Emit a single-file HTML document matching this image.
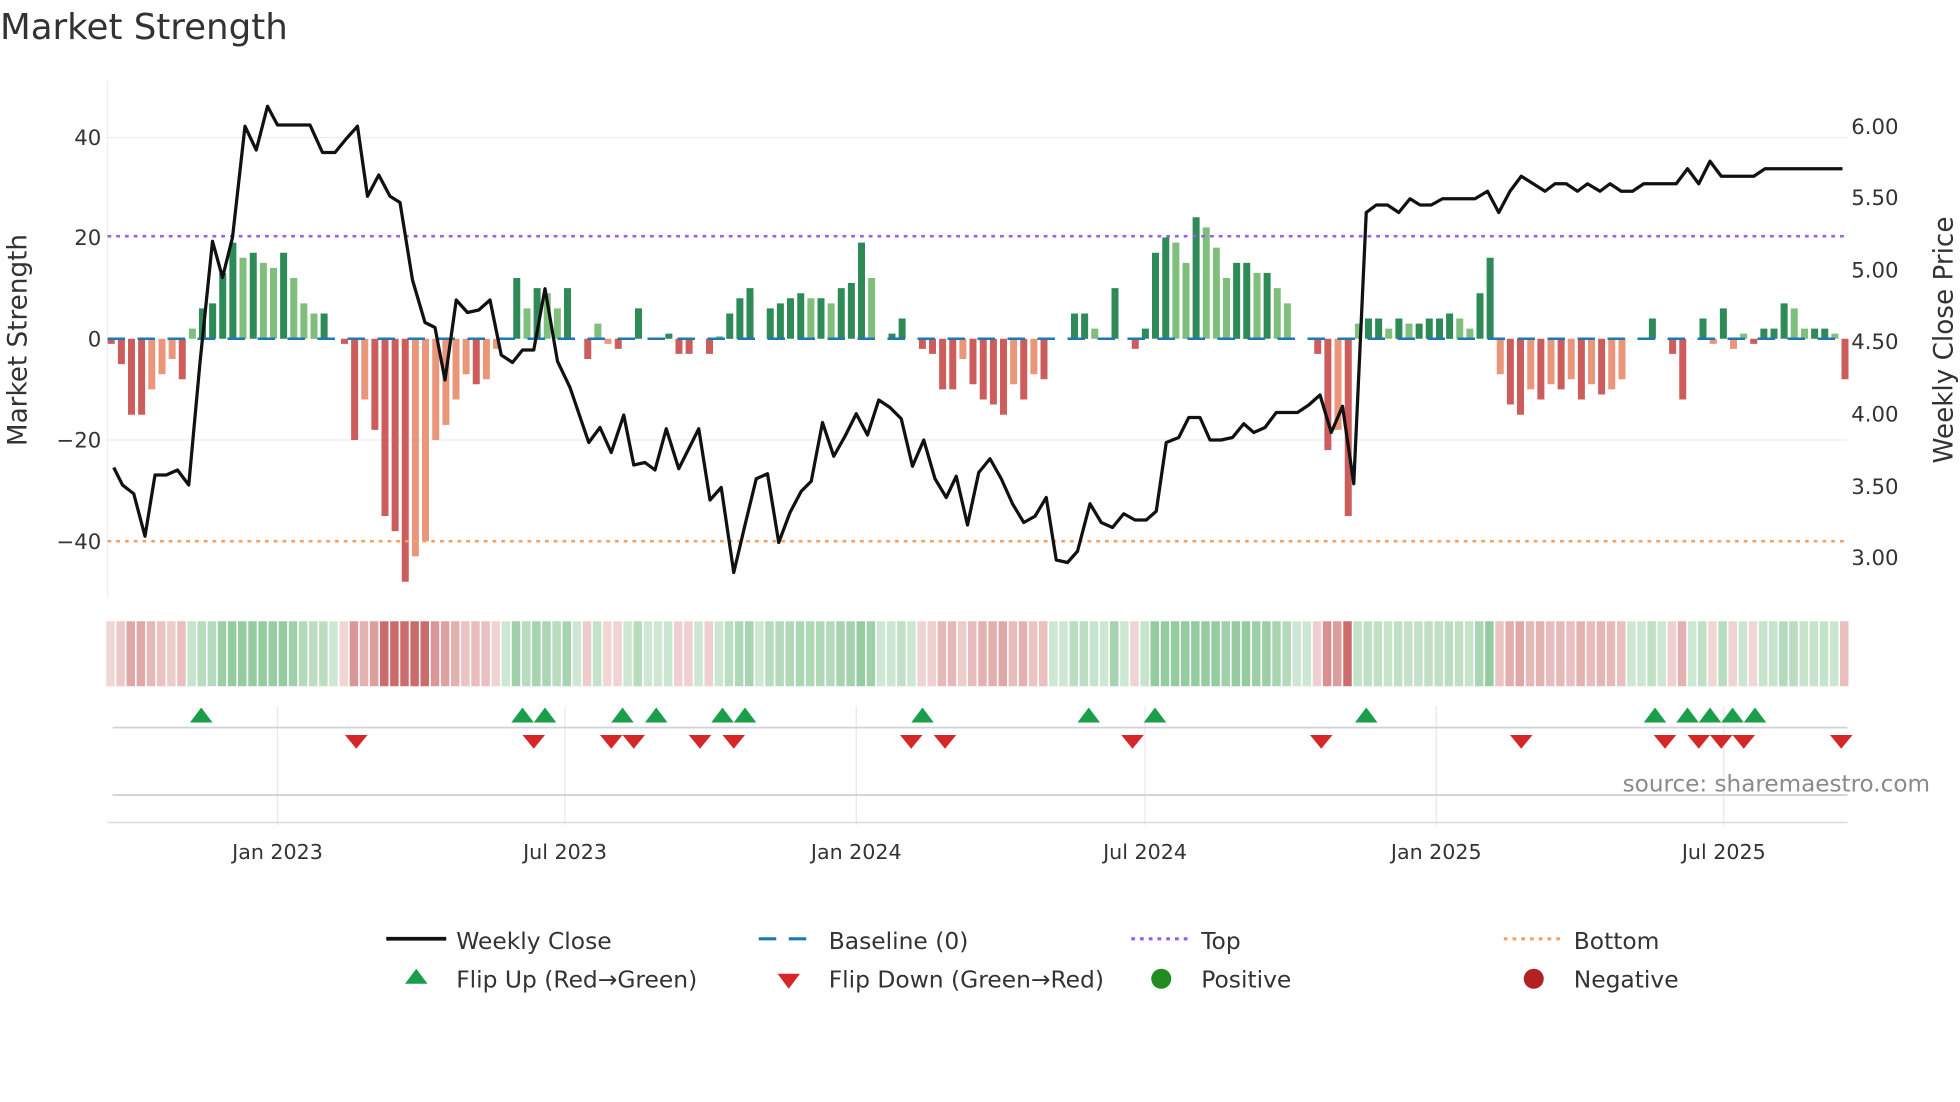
<!DOCTYPE html>
<html><head><meta charset="utf-8"><style>
html,body{margin:0;padding:0;background:#fff;width:1960px;height:1102px;overflow:hidden}
svg{display:block}
text{font-family:"DejaVu Sans","Liberation Sans",sans-serif;fill:#333}
</style></head><body>
<svg id="s" width="1960" height="1102" viewBox="0 0 1568 881.6" xmlns="http://www.w3.org/2000/svg">
<text x="0" y="31" font-size="28.5" fill="#333">Market Strength</text>
<g stroke="#ececec" stroke-width="1">
<line x1="86" y1="110" x2="1478" y2="110"/><line x1="86" y1="352" x2="1478" y2="352"/>
<line x1="86" y1="65" x2="86" y2="478" stroke="#eee"/>
</g>
<g font-size="17" text-anchor="end">
<text x="81" y="116">40</text><text x="81" y="196">20</text><text x="81" y="277">0</text>
<text x="81" y="358">−20</text><text x="81" y="439">−40</text>
</g>
<g font-size="17">
<text x="1481" y="107">6.00</text><text x="1481" y="164">5.50</text><text x="1481" y="222">5.00</text>
<text x="1481" y="279">4.50</text><text x="1481" y="337">4.00</text><text x="1481" y="395">3.50</text><text x="1481" y="452">3.00</text>
</g>
<text font-size="21" transform="translate(21,272) rotate(-90)" text-anchor="middle">Market Strength</text>
<text font-size="21" transform="translate(1562,272) rotate(-90)" text-anchor="middle">Weekly Close Price</text>
<g id="bars"></g>
<line x1="86" y1="271" x2="1478" y2="271" stroke="#1f77b4" stroke-width="2" stroke-dasharray="14,10"/>
<line x1="86" y1="189" x2="1478" y2="189" stroke="#9b5de5" stroke-width="2" stroke-dasharray="3,4"/>
<line x1="86" y1="433" x2="1478" y2="433" stroke="#f4a261" stroke-width="2" stroke-dasharray="3,4"/>
<polyline id="price" fill="none" stroke="#111" stroke-width="2.6" stroke-linejoin="round"/>
<g id="heat"></g>
<g stroke="#e8e8e8" stroke-width="1">
<line x1="222" y1="565" x2="222" y2="660"/><line x1="452" y1="565" x2="452" y2="660"/><line x1="685" y1="565" x2="685" y2="660"/>
<line x1="916" y1="565" x2="916" y2="660"/><line x1="1149" y1="565" x2="1149" y2="660"/><line x1="1379" y1="565" x2="1379" y2="660"/>
</g>
<line x1="90" y1="582" x2="1478" y2="582" stroke="#d0d4da" stroke-width="1.5"/>
<line x1="90" y1="636" x2="1478" y2="636" stroke="#d0d4da" stroke-width="1.5"/>
<line x1="86" y1="658" x2="1478" y2="658" stroke="#d8dadd" stroke-width="1.2"/>
<g id="tri"></g>
<text x="1544" y="633" font-size="18.5" text-anchor="end" style="fill:#8a8a8a">source: sharemaestro.com</text>
<g font-size="16.5" text-anchor="middle">
<text x="222" y="687">Jan 2023</text><text x="452" y="687">Jul 2023</text><text x="685" y="687">Jan 2024</text>
<text x="916" y="687">Jul 2024</text><text x="1149" y="687">Jan 2025</text><text x="1379" y="687">Jul 2025</text>
</g>
<g font-size="18.7">
<line x1="309" y1="751" x2="357" y2="751" stroke="#111" stroke-width="3"/>
<text x="365" y="759">Weekly Close</text>
<line x1="607" y1="751" x2="655" y2="751" stroke="#1f77b4" stroke-width="2.5" stroke-dasharray="14,10"/>
<text x="663" y="759">Baseline (0)</text>
<line x1="905" y1="751" x2="953" y2="751" stroke="#9b5de5" stroke-width="2.5" stroke-dasharray="3,4"/>
<text x="961" y="759">Top</text>
<line x1="1203" y1="751" x2="1251" y2="751" stroke="#f4a261" stroke-width="2.5" stroke-dasharray="3,4"/>
<text x="1259" y="759">Bottom</text>
<polygon points="333,775 324,787 342,787" fill="#1a9e4a"/>
<text x="365" y="790">Flip Up (Red→Green)</text>
<polygon points="622,779 640,779 631,791" fill="#d62728"/>
<text x="663" y="790">Flip Down (Green→Red)</text>
<circle cx="929" cy="783" r="8" fill="#228b22"/>
<text x="961" y="790">Positive</text>
<circle cx="1227" cy="783" r="8" fill="#b22222"/>
<text x="1259" y="790">Negative</text>
</g>
</svg>
<script>
var V=[-1,-5,-15,-15,-10,-7,-4,-8,2,6,7,13,19,16,17,15,14,17,12,7,5,5,0,-1,-20,-12,-18,-35,-38,-48,-43,-40,-20,-17,-12,-7,-9,-8,-2,0,12,6,10,9,6,10,0,-4,3,-1,-2,0,6,0,0,1,-3,-3,0,-3,0.5,5,8,10,0,6,7,8,9,8,8,7,10,11,19,12,0,1,4,0,-2,-3,-10,-10,-4,-9,-12,-13,-15,-9,-12,-7,-8,0,0,5,5,2,0,10,0,-2,2,17,20,19,15,24,22,18,12,15,15,13,13,10,7,0,0,-3,-22,-18,-35,3,4,4,2,4,3,3,4,4,5,4,2,9,16,-7,-13,-15,-10,-12,-9,-10,-8,-12,-9,-11,-10,-8,0,0,4,0,-3,-12,0,4,-1,6,-2,1,-1,2,2,7,6,2,2,2,1,-8];
var n=V.length,x0=89,x1=1476,dx=(x1-x0)/(n-1),b='',h='';
for(var i=0;i<n;i++){var v=V[i],p=i?Math.abs(V[i-1]):0,x=x0+i*dx,up=Math.abs(v)>=p;
var c=v>=0?(up?'#2e8b57':'#7fbf7b'):(up?'#cd5c5c':'#e9967a');
var y=271-v*4.05;if(v!==0)b+='<rect x="'+(x-2.8).toFixed(1)+'" y="'+Math.min(y,271).toFixed(1)+'" width="5.6" height="'+Math.abs(271-y).toFixed(1)+'" fill="'+c+'"/>';
var hc=v>=0?'rgba(60,160,80,'+(0.25+Math.min(0.3,Math.abs(v)/50))+')':'rgba(190,70,70,'+(0.2+Math.min(0.6,Math.abs(v)/55))+')';
h+='<rect x="'+(x-4).toFixed(1)+'" y="497" width="'+(dx-1.3).toFixed(1)+'" height="52" fill="'+hc+'"/>';}
document.getElementById('bars').innerHTML=b;document.getElementById('heat').innerHTML=h;
document.getElementById('price').setAttribute('points',"91,374 98,388 107,395 116,429 124,380 133,380 142,376 151,388 160,290 170,193 178,222 186,190 196,101 205,120 214,85 222,100 248,100 258,122 268,122 277,111 286,101 294,157 303,140 312,157 320,162 330,224 340,258 348,262 356,304 365,240 374,250 383,248 392,240 401,284 410,290 418,280 427,280 436,231 446,289 456,310 471,354 480,342 489,362 499,332 507,372 516,370 524,376 533,343 543,375 559,343 568,400 577,390 587,458 596,420 605,383 614,379 623,434 632,410 641,393 649,385 658,338 667,365 676,349 685,331 694,348 703,320 712,326 721,335 730,373 739,352 748,383 757,398 765,381 774,420 783,378 792,367 801,383 810,403 819,418 828,413 837,398 845,448 854,450 862,441 872,403 881,418 890,422 899,411 908,416 917,416 925,409 933,354 943,350 951,334 960,334 968,352 977,352 986,350 995,339 1003,346 1012,342 1021,330 1038,330 1047,324 1056,316 1065,346 1074,325 1083,387 1093,170 1101,164 1110,164 1119,170 1128,159 1136,164 1145,164 1154,159 1180,159 1190,153 1199,170 1208,153 1217,141 1225,146 1236,153 1244,147 1253,147 1262,153 1270,147 1280,153 1288,147 1297,153 1306,153 1315,147 1341,147 1350,135 1359,147 1368,129 1377,141 1403,141 1412,135 1474,135");
var U=[161,418,436,498,525,578,596,738,871,924,1093,1324,1350,1368,1386,1404],D=[285,427,489,507,560,587,729,756,906,1057,1217,1332,1359,1377,1395,1473],t='';
U.forEach(function(x){t+='<polygon points="'+x+',566 '+(x-9)+',578 '+(x+9)+',578" fill="#1a9e4a"/>';});
D.forEach(function(x){t+='<polygon points="'+(x-9)+',588 '+(x+9)+',588 '+x+',599" fill="#d62728"/>';});
document.getElementById('tri').innerHTML=t;
</script>
</body></html>
